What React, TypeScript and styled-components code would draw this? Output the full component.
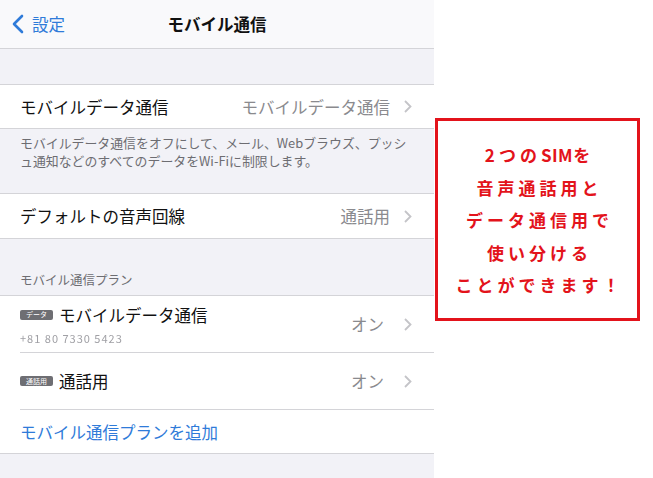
import React from 'react'
import styled, { createGlobalStyle } from 'styled-components'

const GlobalStyle = createGlobalStyle`
  body {
    margin: 0;
    background: #ffffff;
    font-family: "Noto Sans CJK JP", "Noto Sans", sans-serif;
  }
`

const Page = styled.div`
  display: flex;
  width: 653px;
  height: 478px;
  overflow: hidden;
`

const Screen = styled.div`
  width: 434px;
  height: 478px;
  background: #f2f2f7;
  display: flex;
  flex-direction: column;
`

const NavBar = styled.div`
  height: 48px;
  background: #f9f9fb;
  border-bottom: 1px solid #d4d4d8;
  display: flex;
  align-items: center;
  position: relative;
`

const BackButton = styled.div`
  display: flex;
  align-items: center;
  gap: 8px;
  padding-left: 12px;
  color: #2f7bd9;
  font-size: 16.5px;
`

const NavTitle = styled.div`
  position: absolute;
  left: 0;
  right: 0;
  text-align: center;
  font-size: 16.5px;
  font-weight: 700;
  color: #111;
  pointer-events: none;
`

const Gap = styled.div<{ h: number }>`
  height: ${(p) => p.h}px;
  flex-shrink: 0;
`

const Group = styled.div`
  background: #ffffff;
  border-top: 1px solid #d4d4d8;
  border-bottom: 1px solid #d4d4d8;
`

const Row = styled.div<{ h: number; last?: boolean }>`
  height: ${(p) => p.h}px;
  margin-left: 20px;
  padding-right: 22px;
  display: flex;
  align-items: center;
  border-bottom: ${(p) => (p.last ? 'none' : '1px solid #d4d4d8')};
  box-sizing: border-box;
`

const Label = styled.div`
  flex: 1;
  font-size: 16.5px;
  color: #111;
  display: flex;
  flex-direction: column;
`

const TitleLine = styled.div`
  display: flex;
  align-items: center;
  gap: 6px;
`

const Badge = styled.span`
  display: inline-flex;
  align-items: center;
  justify-content: center;
  width: 33px;
  height: 10px;
  border-radius: 2px;
  background: #6e6e73;
  color: #fff;
  font-size: 7px;
  line-height: 1;
`

const Masked = styled.div`
  font-size: 11px;
  color: #a0a0a5;
  letter-spacing: 1px;
  filter: blur(0.6px);
  margin-top: 3px;
`

const Value = styled.div<{ gap?: number }>`
  font-size: 16.5px;
  color: #8a8a8e;
  margin-right: ${(p) => p.gap ?? 14}px;
`

const Chevron = () => (
  <svg width="8" height="13" viewBox="0 0 8 13">
    <path d="M1 1l5.5 5.5L1 12" fill="none" stroke="#c4c4c8" strokeWidth="1.8" />
  </svg>
)

const Footer = styled.div`
  height: 64px;
  padding: 5px 20px 0;
  box-sizing: border-box;
  font-size: 12.9px;
  line-height: 18px;
  color: #6d6d72;
`

const SectionHeader = styled.div`
  height: 56px;
  padding: 0 20px 6px;
  box-sizing: border-box;
  display: flex;
  align-items: flex-end;
  font-size: 12.5px;
  color: #6d6d72;
`

const LinkText = styled.div`
  font-size: 16.5px;
  color: #2f7bd9;
`

const Aside = styled.div`
  flex: 1;
  padding: 118px 0 0 1px;
`

const NoteBox = styled.div`
  width: 205px;
  height: 203px;
  box-sizing: border-box;
  border: 3px solid #e3131b;
  display: flex;
  flex-direction: column;
  justify-content: center;
  align-items: center;
  padding-top: 2px;
`

const NoteLine = styled.div`
  font-size: 17px;
  line-height: 32.5px;
  font-weight: 700;
  color: #e3131b;
  letter-spacing: 4px;
  padding-left: 4px;
`

const Latin = styled.span`
  letter-spacing: 0.5px;
`

export default function App() {
  return (
    <Page>
      <GlobalStyle />
      <Screen>
        <NavBar>
          <BackButton>
            <svg width="12" height="20" viewBox="0 0 12 20">
              <path d="M10 2L2 10l8 8" fill="none" stroke="#2f7bd9" strokeWidth="2.6" strokeLinecap="round" strokeLinejoin="round" />
            </svg>
            設定
          </BackButton>
          <NavTitle>モバイル通信</NavTitle>
        </NavBar>
        <Gap h={35} />
        <Group>
          <Row h={43} last>
            <Label>モバイルデータ通信</Label>
            <Value>モバイルデータ通信</Value>
            <Chevron />
          </Row>
        </Group>
        <Footer>
          モバイルデータ通信をオフにして、メール、Webブラウズ、プッシ
          <br />
          ュ通知などのすべてのデータをWi-Fiに制限します。
        </Footer>
        <Group>
          <Row h={44} last>
            <Label>デフォルトの音声回線</Label>
            <Value>通話用</Value>
            <Chevron />
          </Row>
        </Group>
        <SectionHeader>モバイル通信プラン</SectionHeader>
        <Group>
          <Row h={57}>
            <Label>
              <TitleLine>
                <Badge>データ</Badge>
                モバイルデータ通信
              </TitleLine>
              <Masked>+81 80 7330 5423</Masked>
            </Label>
            <Value gap={20}>オン</Value>
            <Chevron />
          </Row>
          <Row h={57}>
            <Label>
              <TitleLine>
                <Badge>通話用</Badge>
                通話用
              </TitleLine>
            </Label>
            <Value gap={20}>オン</Value>
            <Chevron />
          </Row>
          <Row h={43} last>
            <LinkText>モバイル通信プランを追加</LinkText>
          </Row>
        </Group>
      </Screen>
      <Aside>
        <NoteBox>
          <NoteLine>
            2つの<Latin>SIM</Latin>を
          </NoteLine>
          <NoteLine>音声通話用と</NoteLine>
          <NoteLine>データ通信用で</NoteLine>
          <NoteLine>使い分ける</NoteLine>
          <NoteLine>ことができます！</NoteLine>
        </NoteBox>
      </Aside>
    </Page>
  )
}
